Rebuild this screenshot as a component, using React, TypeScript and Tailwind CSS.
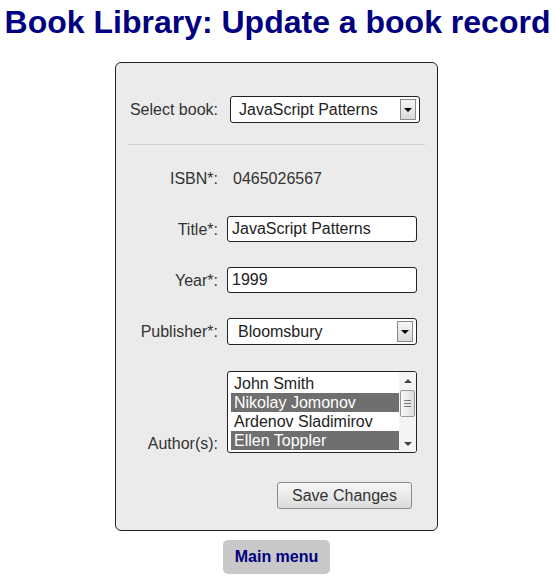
const font = "font-['Liberation_Sans',Arial,sans-serif]";

const authors = [
  { name: 'John Smith', selected: false },
  { name: 'Nikolay Jomonov', selected: true },
  { name: 'Ardenov Sladimirov', selected: false },
  { name: 'Ellen Toppler', selected: true },
];

const Arrow = ({ up = false, color = 'border-t-black' }: { up?: boolean; color?: string }) => (
  <span
    className={`h-0 w-0 border-x-[4px] border-x-transparent ${
      up ? 'border-b-[4px] border-b-[#444]' : `border-t-[4px] ${color}`
    }`}
  />
);

const SelectBox = ({ value, className = '' }: { value: string; className?: string }) => (
  <div
    className={`flex h-[27px] w-[190px] items-center justify-between rounded-[3px] border border-[#222] bg-white pr-[3px] text-[16px] text-[#222] ${className}`}
  >
    <span>{value}</span>
    <span className="flex h-[21px] w-[16px] items-center justify-center border border-[#8a8a8a] bg-gradient-to-b from-[#f6f6f6] to-[#dadada]">
      <Arrow />
    </span>
  </div>
);

const Label = ({ children }: { children: React.ReactNode }) => (
  <div className="w-[102px] text-right text-[16px] leading-[19px] text-[#333]">{children}</div>
);

const TextInput = ({ value }: { value: string }) => (
  <input
    readOnly
    defaultValue={value}
    className="ml-[9px] h-[26px] w-[190px] rounded-[3px] border border-[#222] bg-white pl-[4px] text-[16px] text-[#222] outline-none"
  />
);

export default function App() {
  return (
    <div className={`${font} w-[555px] pt-[4px]`}>
      <h1 className="text-center text-[32px] font-bold leading-[37px] text-[#000080]">
        Book Library: Update a book record
      </h1>

      <div className="w-[553px]">
        <div className="mx-auto mt-[21px] w-[323px] rounded-[6px] border border-[#222] bg-[#ebebeb] pt-[33px] pb-[21px]">
          <div className="flex items-center">
            <Label>Select book:</Label>
            <SelectBox value="JavaScript Patterns" className="ml-[12px] pl-[8px]" />
          </div>

          <div className="mx-[12px] mt-[21px] h-px bg-[#cfcfcf]" />

          <div className="mt-[21px] flex h-[25px] items-center">
            <Label>ISBN*:</Label>
            <span className="ml-[15px] text-[16px] text-[#333]">0465026567</span>
          </div>

          <div className="mt-[25px] flex items-center">
            <Label>Title*:</Label>
            <TextInput value="JavaScript Patterns" />
          </div>

          <div className="mt-[25px] flex items-center">
            <Label>Year*:</Label>
            <TextInput value="1999" />
          </div>

          <div className="mt-[25px] flex items-center">
            <Label>Publisher*:</Label>
            <SelectBox value="Bloomsbury" className="ml-[9px] pl-[10px]" />
          </div>

          <div className="mt-[26px] flex items-end">
            <Label>Author(s):</Label>
            <div className="ml-[9px] flex h-[82px] w-[190px] overflow-hidden rounded-[3px] border border-[#222] bg-white">
              <div className="flex-1 pl-[3px] pt-[2px]">
                {authors.map((a) => (
                  <div
                    key={a.name}
                    className={`h-[19px] pl-[3px] text-[16px] leading-[19px] ${
                      a.selected ? 'bg-[#6f6f6f] text-white' : 'text-[#222]'
                    }`}
                  >
                    {a.name}
                  </div>
                ))}
              </div>
              <div className="flex w-[17px] flex-col items-center bg-[#f4f4f4] pb-[6px]">
                <div className="flex h-[17px] items-center justify-center">
                  <Arrow up />
                </div>
                <div className="mt-[1px] flex h-[27px] w-[15px] flex-col items-center justify-center gap-[2px] rounded-[2px] border border-[#9a9a9a] bg-gradient-to-r from-[#f8f8f8] to-[#dedede]">
                  <span className="h-px w-[7px] bg-[#777]" />
                  <span className="h-px w-[7px] bg-[#777]" />
                  <span className="h-px w-[7px] bg-[#777]" />
                </div>
                <div className="flex-1" />
                <Arrow color="border-t-[#444]" />
              </div>
            </div>
          </div>

          <div className="mt-[29px] flex justify-end pr-[25px]">
            <button className="h-[27px] w-[135px] rounded-[3px] border border-[#8a8a8a] bg-gradient-to-b from-[#f7f7f7] to-[#dcdcdc] text-[16px] text-[#333]">
              Save Changes
            </button>
          </div>
        </div>

        <div className="mt-[9px] flex justify-center">
          <button className="h-[34px] w-[107px] rounded-[5px] bg-[#c8c8c8] text-[16px] font-bold text-[#000080]">
            Main menu
          </button>
        </div>
      </div>
    </div>
  );
}
